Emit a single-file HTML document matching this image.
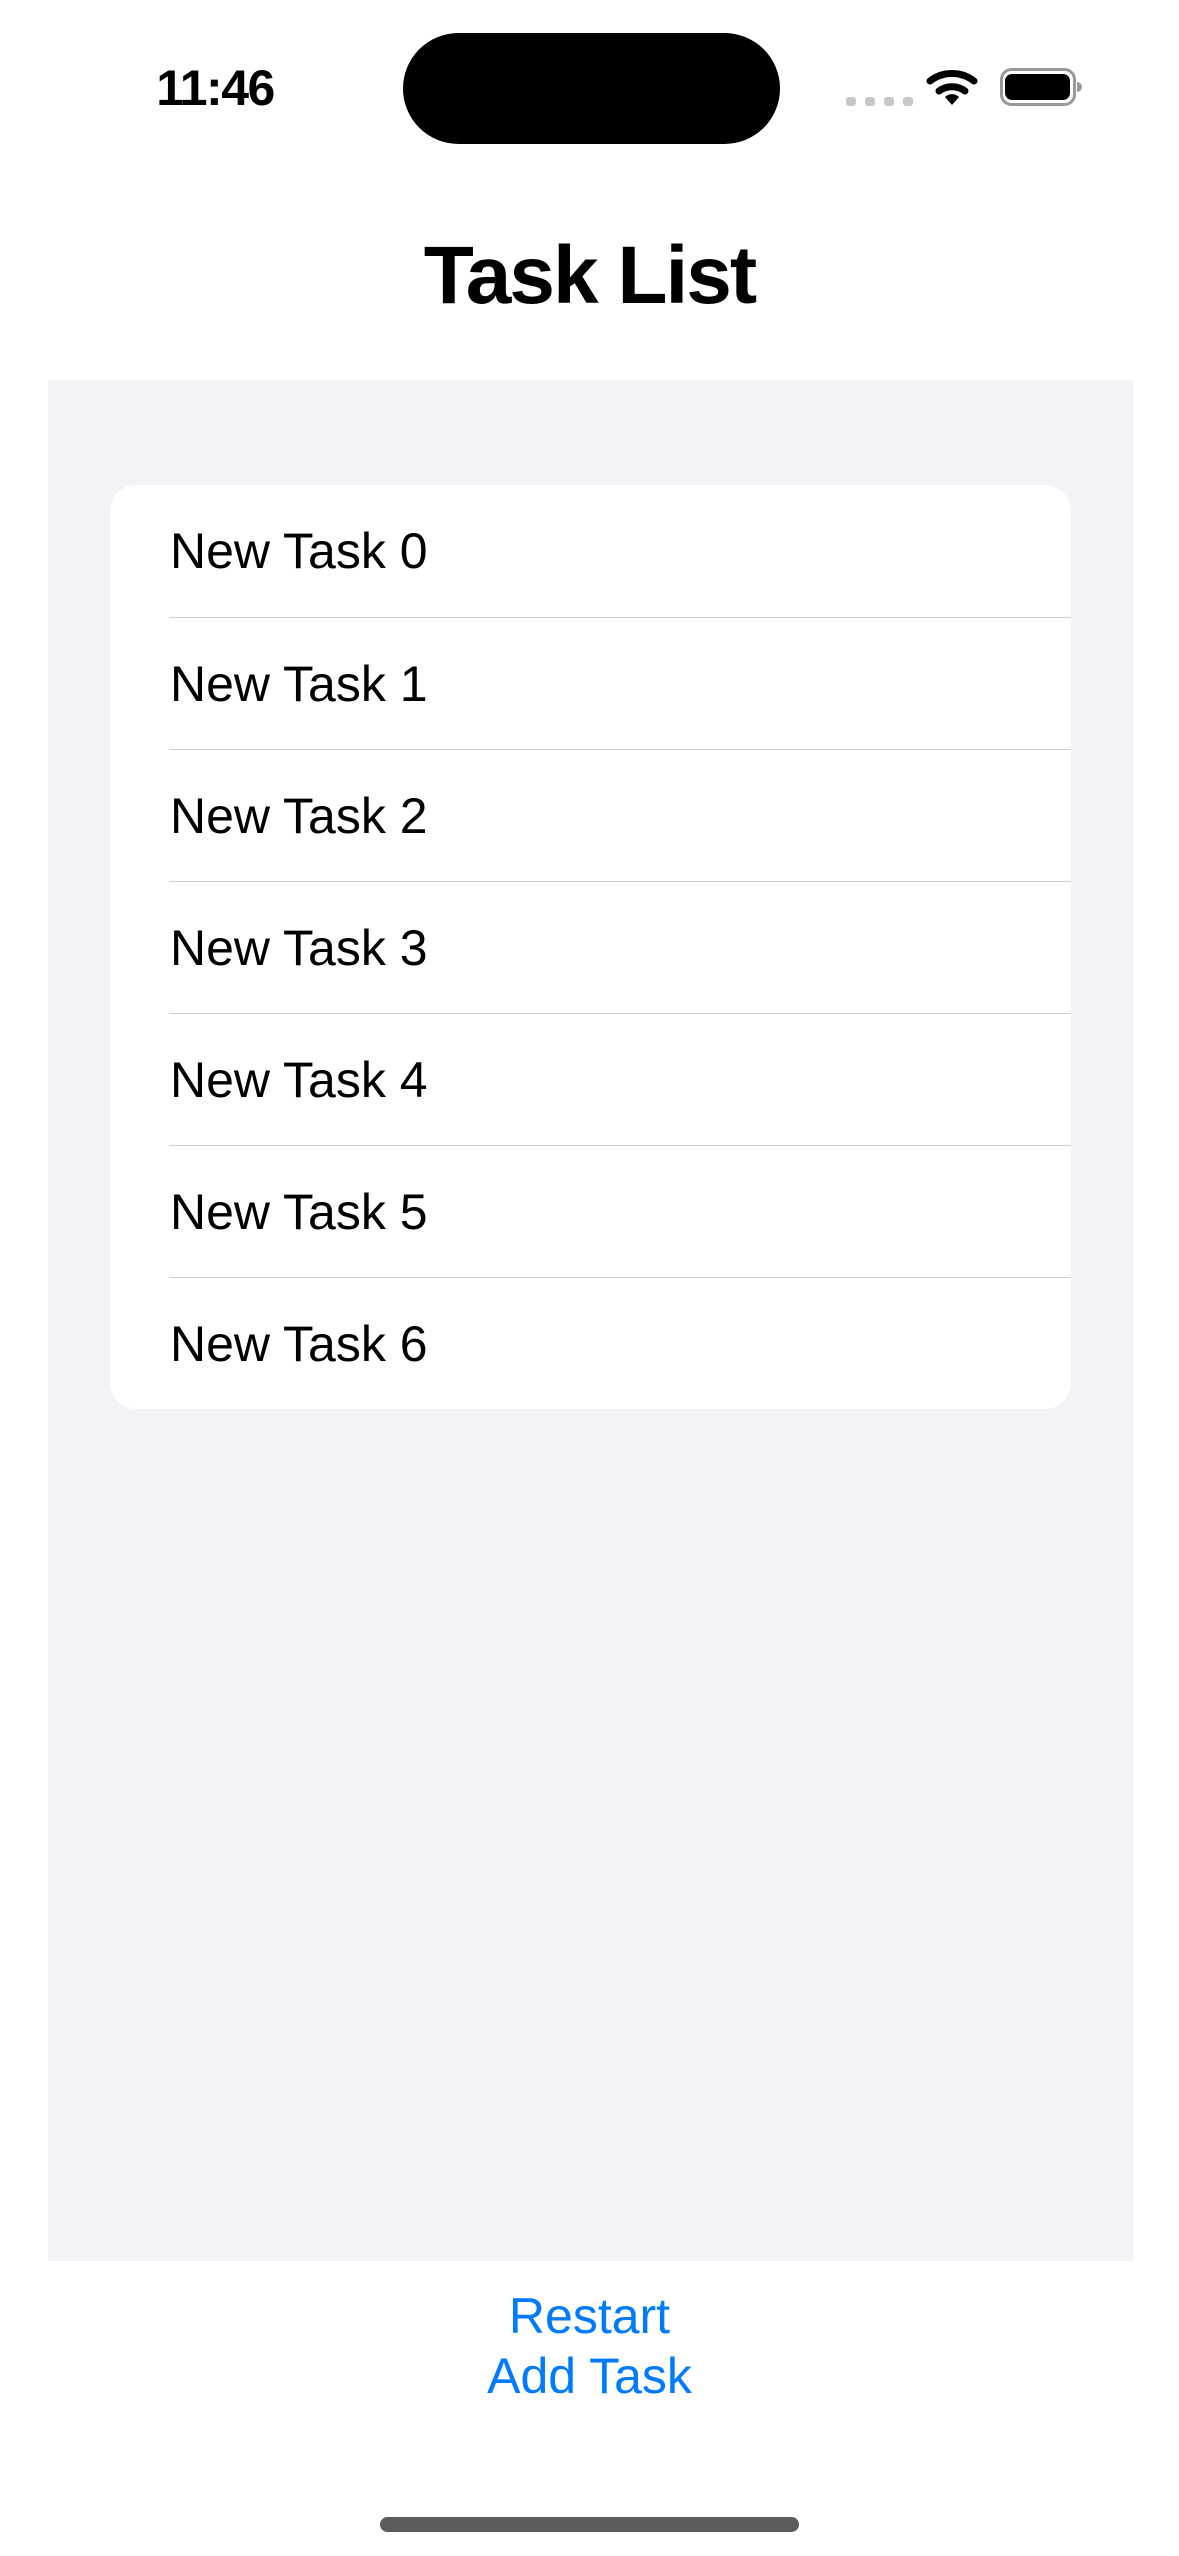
<!DOCTYPE html>
<html><head><meta charset="utf-8"><style>
*{margin:0;padding:0;box-sizing:border-box}
body{width:1179px;height:2556px;background:#fff;position:relative;overflow:hidden;font-family:"Liberation Sans",sans-serif;color:#000}
.abs{position:absolute}
.time{left:150px;top:60px;width:130px;font-size:50px;font-weight:bold;line-height:56px;text-align:center;letter-spacing:-1.5px}
.island{left:403px;top:33px;width:377px;height:111px;background:#000;border-radius:56px}
.title{left:0;width:1179px;top:228px;text-align:center;font-size:82px;font-weight:bold;line-height:96px;letter-spacing:-2px}
.panel{left:48px;top:380px;width:1085px;height:1881px;background:#f2f2f7}
.card{left:110px;top:485px;width:961px;height:924px;background:#fff;border-radius:26px;overflow:hidden}
.row{height:132px;position:relative}
.row span{position:absolute;left:60px;top:0;line-height:132px;font-size:50px}
.row+.row{border-top:1.5px solid #d0d0d4}
.row+.row{margin-left:59px}
.row+.row span{left:1px}
.btn{left:0;width:1179px;text-align:center;color:#007aff;font-size:50px;line-height:60px}
.home{left:380px;top:2517px;width:419px;height:15px;background:#5c5c5c;border-radius:8px}
</style></head><body>
<div class="abs time">11:46</div>
<div class="abs island"></div>
<svg class="abs" style="left:840px;top:60px" width="260" height="60" viewBox="840 60 260 60">
<rect x="846" y="97" width="10" height="9" rx="3" fill="#c8c8c8"/>
<rect x="865" y="97" width="10" height="9" rx="3" fill="#c8c8c8"/>
<rect x="884" y="97" width="10" height="9" rx="3" fill="#c8c8c8"/>
<rect x="903" y="97" width="10" height="9" rx="3" fill="#c8c8c8"/>
<path d="M930 81 A36 36 0 0 1 974 81" stroke="#000" stroke-width="7" fill="none" stroke-linecap="round"/>
<path d="M939 91 A22 22 0 0 1 965 91" stroke="#000" stroke-width="7" fill="none" stroke-linecap="round"/>
<path d="M945 97 L952 105 L959 97 A10 10 0 0 0 945 97 Z" fill="#000"/>
<rect x="1001.5" y="69.5" width="73" height="35" rx="10" fill="none" stroke="#999" stroke-width="3"/>
<rect x="1005" y="74" width="65" height="26" rx="7" fill="#000"/>
<path d="M1077 82 a5 5 0 0 1 0 10 z" fill="#999"/>
</svg>
<div class="abs title">Task List</div>
<div class="abs panel"></div>
<div class="abs card">
<div class="row"><span>New Task 0</span></div>
<div class="row"><span>New Task 1</span></div>
<div class="row"><span>New Task 2</span></div>
<div class="row"><span>New Task 3</span></div>
<div class="row"><span>New Task 4</span></div>
<div class="row"><span>New Task 5</span></div>
<div class="row"><span>New Task 6</span></div>
</div>
<div class="abs btn" style="top:2286px">Restart</div>
<div class="abs btn" style="top:2346px">Add Task</div>
<div class="abs home"></div>
</body></html>
